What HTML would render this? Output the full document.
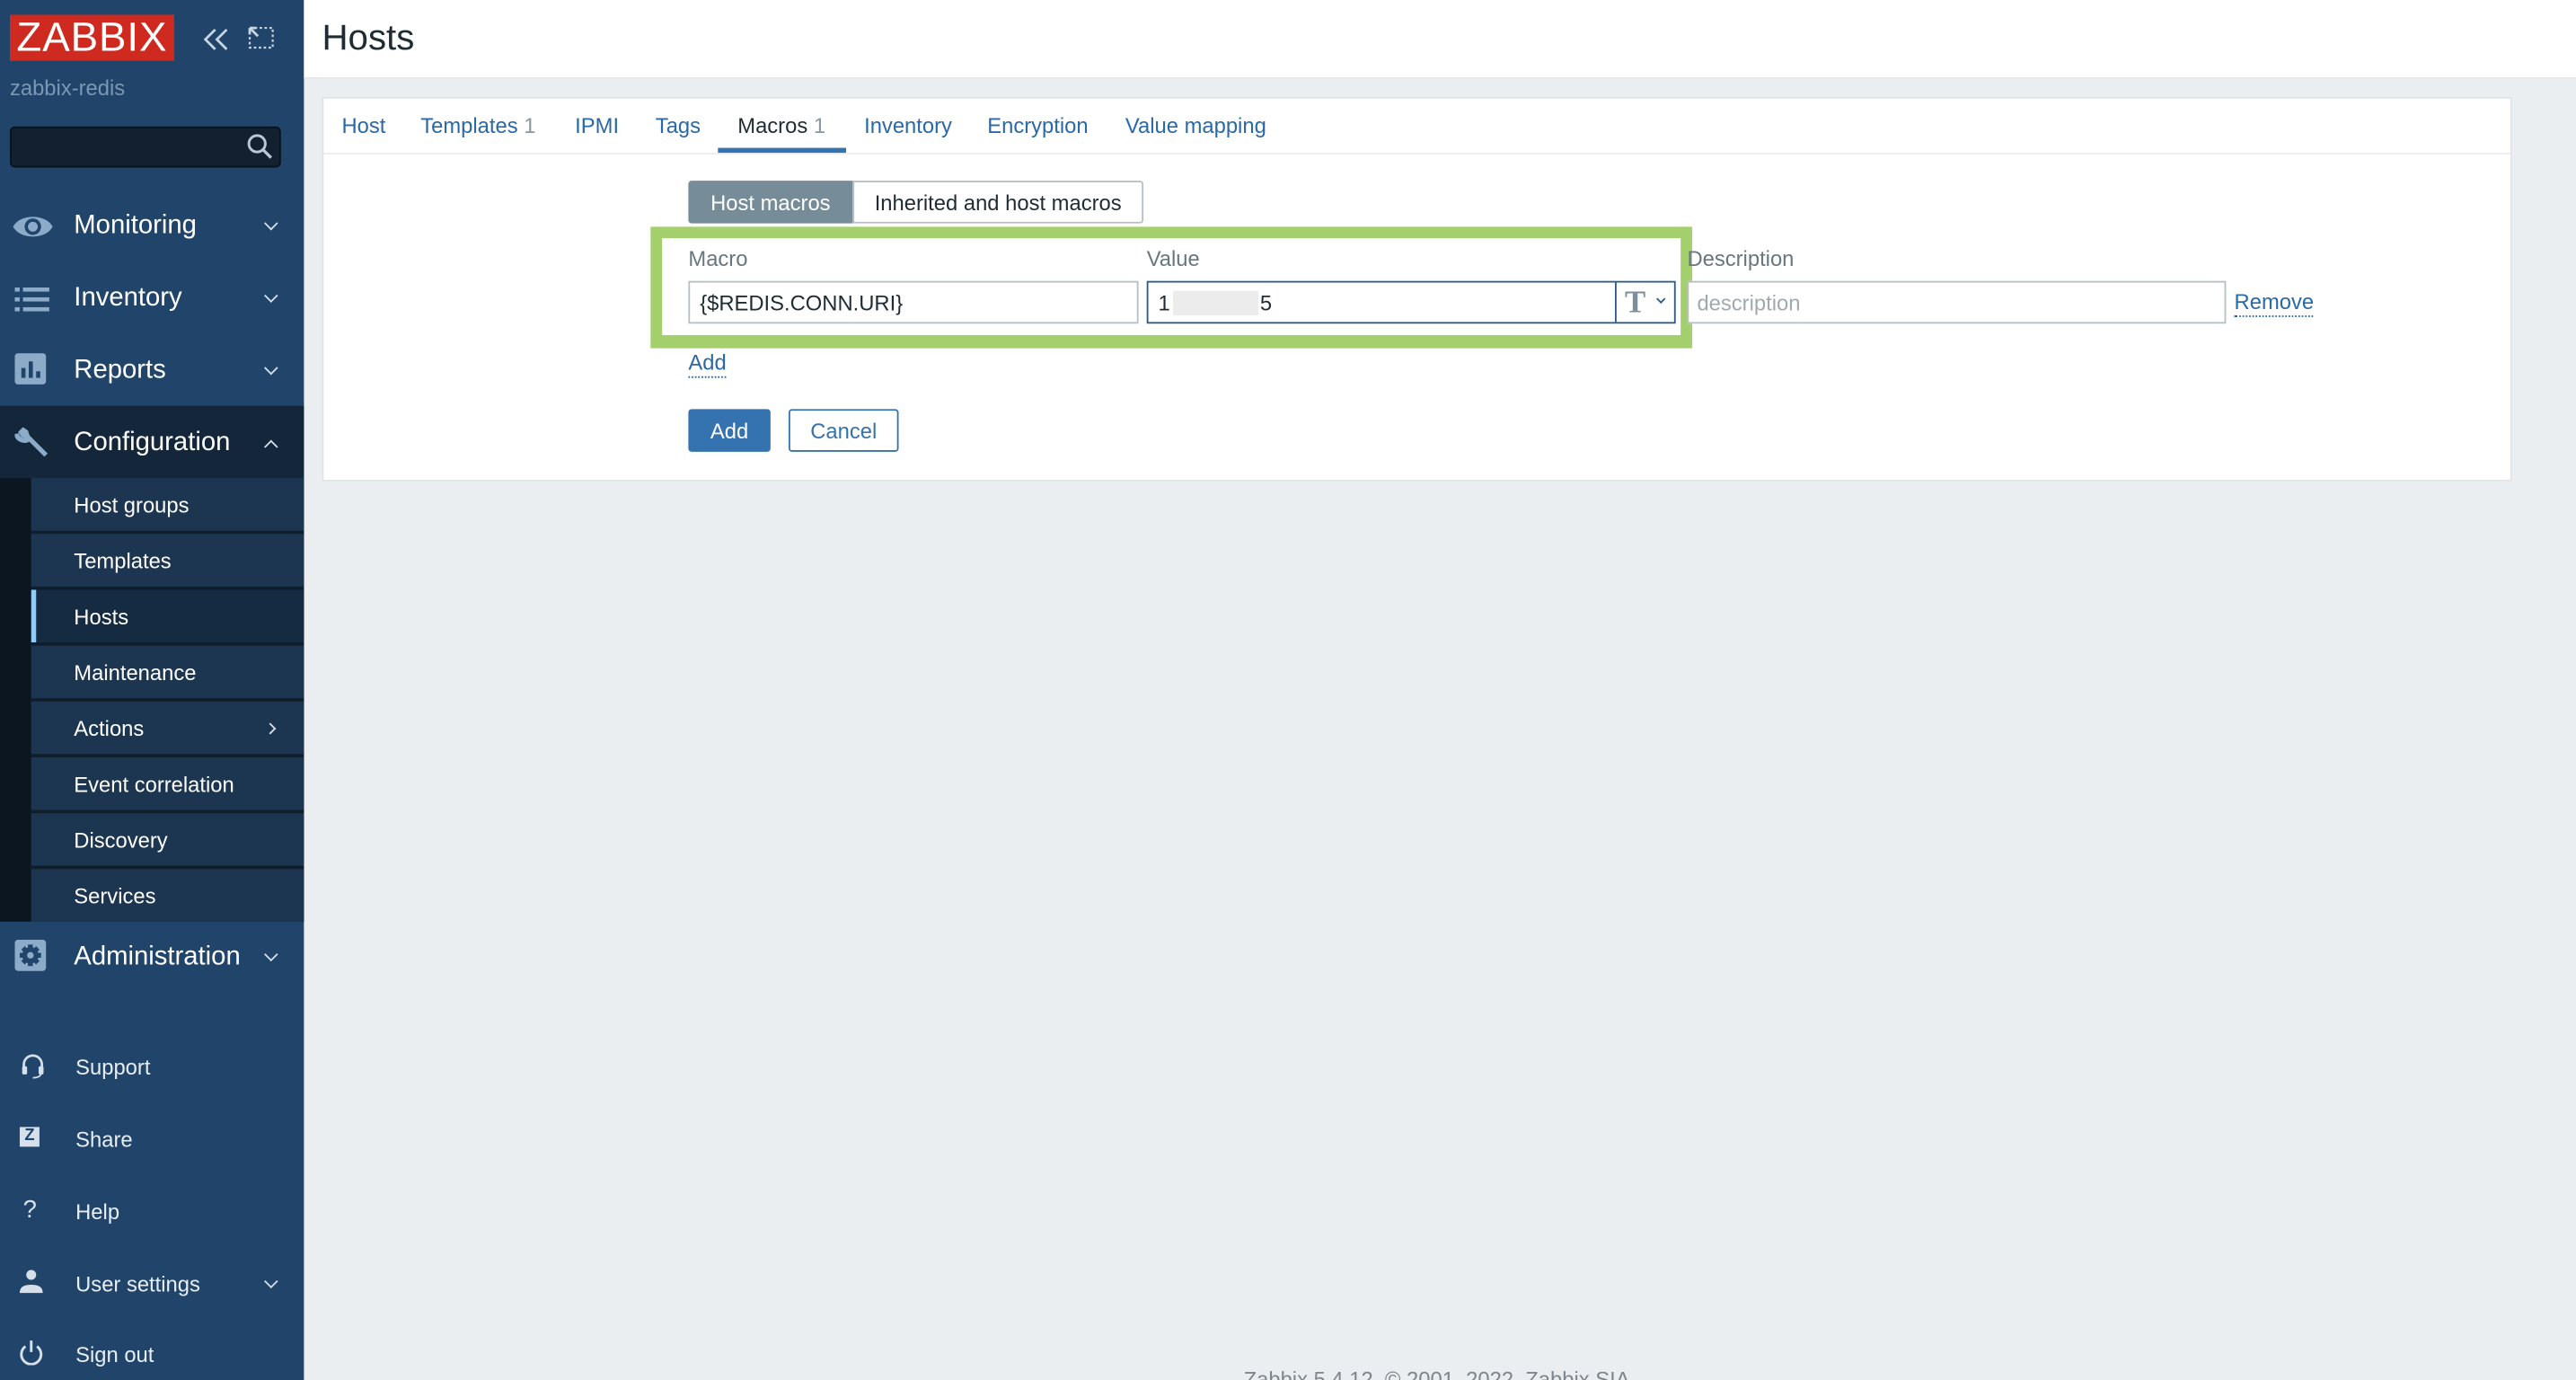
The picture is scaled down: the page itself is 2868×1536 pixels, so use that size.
<!DOCTYPE html>
<html><head><meta charset="utf-8"><style>
html,body{margin:0;padding:0;width:2868px;height:1536px;overflow:hidden;background:#ebeef0;}
#s{position:absolute;left:0;top:0;width:1568px;height:840px;transform:scale(1.82908,1.82858);transform-origin:0 0;font-family:"Liberation Sans",Arial,sans-serif;background:#ebeef0;overflow:hidden;}
.a{position:absolute;}
.side{left:0;top:0;width:185px;height:840px;background:#21456a;}
.mi{position:absolute;left:45px;color:#fff;font-size:16px;line-height:20px;}
.chev{position:absolute;left:162px;width:5px;height:5px;border-right:1.3px solid #d6e0ea;border-bottom:1.3px solid #d6e0ea;transform:rotate(45deg);}
.sub{position:absolute;left:19px;width:166px;height:32px;background:#1c3550;color:#fff;font-size:13px;line-height:33px;}
.sub span{position:absolute;left:26px;}
.bi{position:absolute;left:46px;color:#e8eef4;font-size:13px;line-height:17px;}
.tab{position:absolute;top:69px;font-size:13px;color:#2a69a8;line-height:16px;}
.tab i{font-style:normal;color:#8c979e;}
.lbl{position:absolute;top:150px;font-size:13px;color:#68777f;line-height:16px;}
.inp{position:absolute;top:171px;height:24px;border:1px solid #b6c0c3;background:#fff;box-sizing:content-box;font-size:13px;line-height:25px;}
</style></head><body><div id="s">
<div class="a side"></div>
<div class="a" style="left:6px;top:9px;width:100px;height:28px;background:#cf2a20;color:#fff;font-size:25px;line-height:29px;text-align:center;letter-spacing:0.5px;">ZABBIX</div>
<svg class="a" style="left:122px;top:16px" width="20" height="16" viewBox="0 0 20 16"><path d="M9 2L3 8l6 6M16 2l-6 6 6 6" fill="none" stroke="#c7d5e2" stroke-width="1.5"/></svg>
<svg class="a" style="left:150px;top:15px" width="18" height="18" viewBox="0 0 18 18"><path d="M5 2h11v12H2V6" fill="none" stroke="#c7d5e2" stroke-width="1.2" stroke-dasharray="1.5 1.5"/><path d="M2 2l5 5M2 2h4M2 2v4" stroke="#c7d5e2" stroke-width="1.5" fill="none"/></svg>
<div class="a" style="left:6px;top:46px;color:#7c97b2;font-size:13px;line-height:16px;">zabbix-redis</div>
<div class="a" style="left:6px;top:77px;width:163px;height:23px;background:#12202f;border:1px solid #0a121a;border-radius:3px;"></div>
<svg class="a" style="left:149px;top:80px" width="18" height="18" viewBox="0 0 18 18"><circle cx="7.5" cy="7.5" r="5" fill="none" stroke="#b9c8d6" stroke-width="1.6"/><path d="M11 11l5 5" stroke="#b9c8d6" stroke-width="1.8"/></svg>
<svg class="a" style="left:7px;top:128px" width="26" height="20" viewBox="0 0 26 20"><path d="M1 10C5 2 21 2 25 10C21 18 5 18 1 10Z" fill="#8cabc8"/><circle cx="13" cy="10" r="5" fill="#21456a"/><circle cx="13" cy="10" r="3" fill="#8cabc8"/></svg>
<div class="mi" style="top:128px">Monitoring</div><div class="chev" style="top:133px"></div>
<svg class="a" style="left:9px;top:172px" width="22" height="20" viewBox="0 0 22 20"><g fill="#8cabc8"><rect x="0" y="3" width="3" height="2.5"/><rect x="5" y="3" width="16" height="2.5"/><rect x="0" y="9" width="3" height="2.5"/><rect x="5" y="9" width="16" height="2.5"/><rect x="0" y="15" width="3" height="2.5"/><rect x="5" y="15" width="16" height="2.5"/></g></svg>
<div class="mi" style="top:172px">Inventory</div><div class="chev" style="top:177px"></div>
<svg class="a" style="left:9px;top:215px" width="20" height="20" viewBox="0 0 20 20"><rect width="19" height="19" rx="2" fill="#8cabc8"/><g fill="#21456a"><rect x="4" y="9" width="2.5" height="6"/><rect x="8.5" y="5" width="2.5" height="10"/><rect x="13" y="11" width="2.5" height="4"/></g></svg>
<div class="mi" style="top:216px">Reports</div><div class="chev" style="top:221px"></div>
<div class="a" style="left:0;top:247px;width:185px;height:44px;background:#14263a;"></div>
<svg class="a" style="left:9px;top:258px" width="22" height="22" viewBox="0 0 22 22"><path d="M2 5l3-3 3 2 1 3 11 11-2 2L7 9 4 8Z" fill="#8cabc8"/><path d="M1 6a5 5 0 0 0 8 3" stroke="#8cabc8" stroke-width="3" fill="none"/></svg>
<div class="mi" style="top:260px">Configuration</div><div class="chev" style="top:269px;transform:rotate(225deg)"></div>
<div class="a" style="left:0;top:291px;width:19px;height:270px;background:#0b1620;"></div>
<div class="a" style="left:19px;top:291px;width:166px;height:270px;background:#101e2c;"></div>
<div class="sub" style="top:291px"><span>Host groups</span></div>
<div class="sub" style="top:325px"><span>Templates</span></div>
<div class="sub" style="top:359px;background:#152b42"><span>Hosts</span></div>
<div class="a" style="left:19px;top:359px;width:3px;height:32px;background:#8ecbff;"></div>
<div class="sub" style="top:393px"><span>Maintenance</span></div>
<div class="sub" style="top:427px"><span>Actions</span></div>
<div class="chev" style="top:441px;left:162px;transform:rotate(-45deg);width:4px;height:4px"></div>
<div class="sub" style="top:461px"><span>Event correlation</span></div>
<div class="sub" style="top:495px"><span>Discovery</span></div>
<div class="sub" style="top:529px;height:32px"><span>Services</span></div>
<svg class="a" style="left:9px;top:572px" width="20" height="20" viewBox="0 0 20 20"><rect width="19" height="19" rx="2" fill="#8cabc8"/><circle cx="9.5" cy="9.5" r="5" fill="#21456a"/><g stroke="#21456a" stroke-width="3"><path d="M9.5 3v13M3 9.5h13M5 5l9 9M14 5l-9 9"/></g><circle cx="9.5" cy="9.5" r="2" fill="#8cabc8"/></svg>
<div class="mi" style="top:573px">Administration</div><div class="chev" style="top:578px"></div>
<svg class="a" style="left:12px;top:641px" width="16" height="16" viewBox="0 0 16 16"><path d="M2.5 10V7a5.5 5.5 0 0 1 11 0v3" fill="none" stroke="#d6e0ea" stroke-width="1.5"/><rect x="1.5" y="8" width="3" height="5" rx="1" fill="#d6e0ea"/><rect x="11.5" y="8" width="3" height="5" rx="1" fill="#d6e0ea"/><path d="M13 12c0 2-2 3-5 3" stroke="#d6e0ea" fill="none"/></svg>
<div class="bi" style="top:641px">Support</div>
<div class="a" style="left:12px;top:686px;width:12px;height:12px;background:#d6e0ea;color:#21456a;font-size:10px;font-weight:bold;line-height:12px;text-align:center;">Z</div>
<div class="bi" style="top:685px">Share</div>
<div class="a" style="left:14px;top:728px;color:#d6e0ea;font-size:15px;">?</div>
<div class="bi" style="top:729px">Help</div>
<svg class="a" style="left:11px;top:772px" width="16" height="16" viewBox="0 0 16 16"><circle cx="8" cy="4" r="3" fill="#d6e0ea"/><path d="M1 15c0-4 3-5 7-5s7 1 7 5Z" fill="#d6e0ea"/></svg>
<div class="bi" style="top:773px">User settings</div><div class="chev" style="top:777px"></div>
<svg class="a" style="left:11px;top:815px" width="16" height="16" viewBox="0 0 16 16"><path d="M4.5 4.5a6 6 0 1 0 7 0" fill="none" stroke="#d6e0ea" stroke-width="1.6"/><path d="M8 1v7" stroke="#d6e0ea" stroke-width="1.6"/></svg>
<div class="bi" style="top:816px">Sign out</div>
<div class="a" style="left:185px;top:0;width:1383px;height:47px;background:#fff;border-bottom:1px solid #e2e6e9;"></div>
<div class="a" style="left:196px;top:10px;font-size:22px;color:#1f2c33;line-height:26px;">Hosts</div>
<div class="a" style="left:196px;top:59px;width:1333px;height:234px;background:#fff;border:1px solid #dfe4e7;box-sizing:border-box;"></div>
<div class="a" style="left:197px;top:93px;width:1331px;height:1px;background:#ebeef0;"></div>
<div class="tab" style="left:208px">Host</div>
<div class="tab" style="left:256px">Templates <i>1</i></div>
<div class="tab" style="left:350px">IPMI</div>
<div class="tab" style="left:399px">Tags</div>
<div class="tab" style="left:449px;color:#1f2c33">Macros <i>1</i></div>
<div class="a" style="left:437px;top:90px;width:78px;height:3px;background:#3572b0;"></div>
<div class="tab" style="left:526px">Inventory</div>
<div class="tab" style="left:601px">Encryption</div>
<div class="tab" style="left:685px">Value mapping</div>
<div class="a" style="left:419px;top:110px;width:100px;height:26px;background:#768d99;color:#fff;font-size:13px;line-height:27px;text-align:center;border-radius:2px 0 0 2px;">Host macros</div>
<div class="a" style="left:519px;top:110px;width:175px;height:24px;border:1px solid #b6c0c3;background:#fff;color:#1f2c33;font-size:13px;line-height:25px;text-align:center;border-radius:0 2px 2px 0;">Inherited and host macros</div>
<div class="a" style="left:396px;top:138px;width:634px;height:74px;box-sizing:border-box;border:7px solid #a3d06c;border-bottom-width:8px;"></div>
<div class="lbl" style="left:419px">Macro</div>
<div class="lbl" style="left:698px">Value</div>
<div class="lbl" style="left:1027px">Description</div>
<div class="inp" style="left:419px;width:272px;color:#1f2c33;"><span style="padding-left:6px">{$REDIS.CONN.URI}</span></div>
<div class="inp" style="left:698px;width:320px;border-color:#2c5b88;color:#1f2c33;"><span style="padding-left:6px">1</span><span style="position:absolute;left:68px;top:0">5</span>
<div class="a" style="left:15px;top:5px;width:52px;height:15px;background:#ececec;"></div>
<div class="a" style="left:284px;top:0;width:1px;height:24px;background:#2c5b88;"></div>
<div class="a" style="left:290px;top:1px;font-family:'Liberation Serif',serif;font-weight:bold;font-size:19px;color:#7f8f99;line-height:24px;">T</div>
<div class="a" style="left:310px;top:8px;width:3px;height:3px;border-right:1.2px solid #2c5b88;border-bottom:1.2px solid #2c5b88;transform:rotate(45deg);"></div>
</div>
<div class="inp" style="left:1027px;width:326px;color:#a0a9ae;"><span style="padding-left:5px">description</span></div>
<div class="a" style="left:1360px;top:176px;color:#2a69a8;font-size:13px;line-height:16px;border-bottom:1px dotted #2a69a8;">Remove</div>
<div class="a" style="left:419px;top:213px;color:#2a69a8;font-size:13px;line-height:16px;border-bottom:1px dotted #2a69a8;">Add</div>
<div class="a" style="left:419px;top:249px;width:50px;height:26px;background:#3572b0;color:#fff;font-size:13px;line-height:27px;text-align:center;border-radius:2px;">Add</div>
<div class="a" style="left:480px;top:249px;width:65px;height:24px;border:1px solid #3572b0;background:#fff;color:#3572b0;font-size:13px;line-height:25px;text-align:center;border-radius:2px;">Cancel</div>
<div class="a" style="left:757px;top:832px;color:#7d868c;font-size:13px;line-height:16px;">Zabbix 5.4.12. © 2001–2022, Zabbix SIA</div>
</div></body></html>
